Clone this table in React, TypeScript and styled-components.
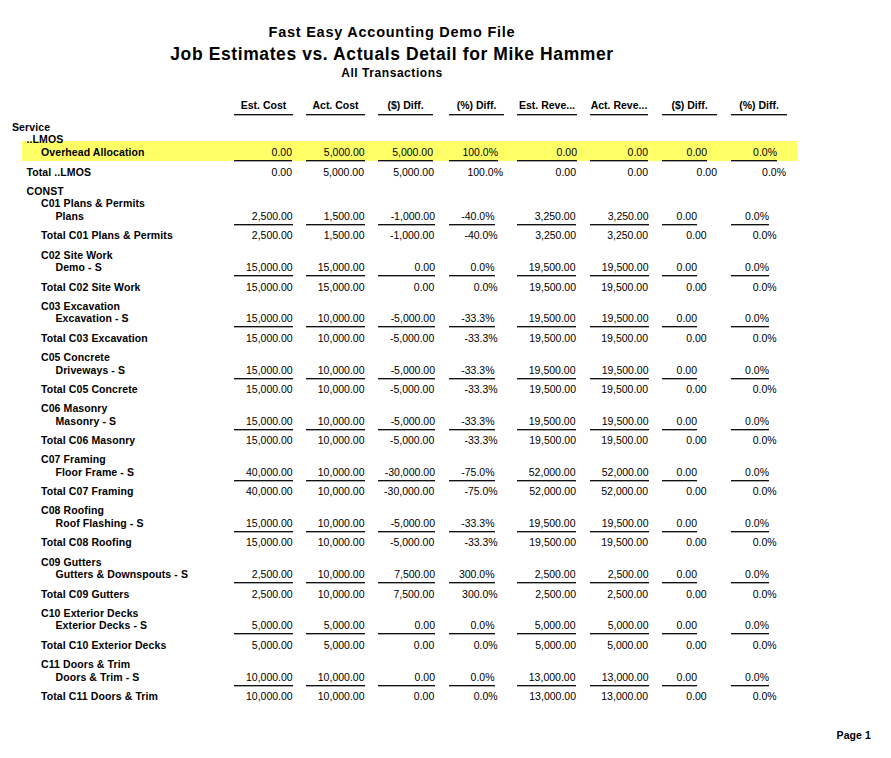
import React from 'react'
import styled, { createGlobalStyle, css } from 'styled-components'

const GlobalStyle = createGlobalStyle`
    body {
        margin: 0;
        background: #fff;
        color: #000;
        font-family: "Liberation Sans", Arial, sans-serif;
    }
`

// column slots (left edge to next column's left edge)
const SLOTS = [72, 72, 71, 68, 73, 72, 69, 69]

const HEAD_W = [59, 59, 55, 55, 60, 58, 55, 56]
const DATA_W = [58.7, 58.5, 57, 45.5, 58.5, 58.5, 35, 38]
const TOTAL_W = [58.7, 58.5, 56.3, 48.7, 59, 58, 44.7, 45.7]
const HL_W = [58, 58.7, 55, 49, 60, 58, 45, 46]
const HL_TOTAL_W = [58, 58, 56, 54, 59, 58, 55, 55]

const HEADERS = ['Est. Cost', 'Act. Cost', '($) Diff.', '(%) Diff.', 'Est. Reve...', 'Act. Reve...', '($) Diff.', '(%) Diff.']

interface Group {
    name: string
    item: string
    values: string[]
}

const groups: Group[] = [
    { name: 'C01 Plans & Permits', item: 'Plans', values: ['2,500.00', '1,500.00', '-1,000.00', '-40.0%', '3,250.00', '3,250.00', '0.00', '0.0%'] },
    { name: 'C02 Site Work', item: 'Demo - S', values: ['15,000.00', '15,000.00', '0.00', '0.0%', '19,500.00', '19,500.00', '0.00', '0.0%'] },
    { name: 'C03 Excavation', item: 'Excavation - S', values: ['15,000.00', '10,000.00', '-5,000.00', '-33.3%', '19,500.00', '19,500.00', '0.00', '0.0%'] },
    { name: 'C05 Concrete', item: 'Driveways - S', values: ['15,000.00', '10,000.00', '-5,000.00', '-33.3%', '19,500.00', '19,500.00', '0.00', '0.0%'] },
    { name: 'C06 Masonry', item: 'Masonry - S', values: ['15,000.00', '10,000.00', '-5,000.00', '-33.3%', '19,500.00', '19,500.00', '0.00', '0.0%'] },
    { name: 'C07 Framing', item: 'Floor Frame - S', values: ['40,000.00', '10,000.00', '-30,000.00', '-75.0%', '52,000.00', '52,000.00', '0.00', '0.0%'] },
    { name: 'C08 Roofing', item: 'Roof Flashing - S', values: ['15,000.00', '10,000.00', '-5,000.00', '-33.3%', '19,500.00', '19,500.00', '0.00', '0.0%'] },
    { name: 'C09 Gutters', item: 'Gutters & Downspouts - S', values: ['2,500.00', '10,000.00', '7,500.00', '300.0%', '2,500.00', '2,500.00', '0.00', '0.0%'] },
    { name: 'C10 Exterior Decks', item: 'Exterior Decks - S', values: ['5,000.00', '5,000.00', '0.00', '0.0%', '5,000.00', '5,000.00', '0.00', '0.0%'] },
    { name: 'C11 Doors & Trim', item: 'Doors & Trim - S', values: ['10,000.00', '10,000.00', '0.00', '0.0%', '13,000.00', '13,000.00', '0.00', '0.0%'] },
]

const overhead = ['0.00', '5,000.00', '5,000.00', '100.0%', '0.00', '0.00', '0.00', '0.0%']

const Page = styled.div`
    width: 891px;
    min-height: 758px;
    box-sizing: border-box;
`

const TitleBlock = styled.div`
    width: 784px;
    padding-top: 24.8px;
    display: flex;
    flex-direction: column;
    align-items: center;
    font-weight: bold;
    line-height: 1;
`

const CompanyName = styled.div`
    font-size: 14.5px;
    letter-spacing: 0.75px;
`

const ReportTitle = styled.div`
    font-size: 17.5px;
    letter-spacing: 0.6px;
    margin-top: 6.7px;
`

const DateRange = styled.div`
    font-size: 12px;
    letter-spacing: 0.55px;
    margin-top: 3.2px;
`

const Report = styled.div`
    padding-left: 12px;
    margin-top: 21.4px;
    font-size: 10.5px;
`

const Row = styled.div`
    display: grid;
    grid-template-columns: 222px ${SLOTS.map((s) => `${s}px`).join(' ')};
    align-items: start;
    box-sizing: border-box;
    line-height: 13px;
`

const HeaderRow = styled(Row)`
    line-height: 11px;
    margin-bottom: 5.7px;
`

const HeadingRow = styled(Row)`
    height: 12.7px;
`

const DataRow = styled(Row)<{ $highlight?: boolean }>`
    height: 19.3px;
    ${(p) =>
        p.$highlight &&
        css`
            height: 25px;
            margin-top: -5px;
            padding-top: 5px;
            background: linear-gradient(to right, transparent 10px, #ffff66 10px, #ffff66 785px, transparent 785px) top left / 100% 20px no-repeat;
        `}
`

const TotalRow = styled(Row)<{ $height?: number }>`
    height: ${(p) => p.$height ?? 19.2}px;
`

const Label = styled.div<{ $level: number }>`
    padding-left: ${(p) => p.$level * 14.5}px;
    font-weight: bold;
    letter-spacing: 0.1px;
    white-space: nowrap;
`

const rule = css`
    border-bottom: 1px solid #111;
    box-shadow: 0 1px 0 #a8a8a8;
`

const HeadCell = styled.div<{ $w: number }>`
    width: ${(p) => p.$w}px;
    text-align: center;
    font-weight: bold;
    white-space: nowrap;
    overflow: hidden;
    padding-bottom: 2.9px;
    ${rule}
`

const Amount = styled.div<{ $w: number; $rule?: boolean }>`
    width: ${(p) => p.$w}px;
    text-align: right;
    white-space: nowrap;
    ${(p) =>
        p.$rule &&
        css`
            padding-bottom: 1px;
            ${rule}
        `}
`

const PageNumber = styled.div`
    margin-top: 20.2px;
    padding-right: 20px;
    text-align: right;
    font-size: 10.5px;
    line-height: 13px;
    font-weight: bold;
    letter-spacing: 0.1px;
`

const Amounts = ({ values, widths, ruled }: { values: string[]; widths: number[]; ruled?: boolean }) => (
    <>
        {values.map((v, i) => (
            <Amount key={i} $w={widths[i]} $rule={ruled}>
                {v}
            </Amount>
        ))}
    </>
)

const App = () => {
    return (
        <Page>
            <GlobalStyle />
            <TitleBlock>
                <CompanyName>Fast Easy Accounting Demo File</CompanyName>
                <ReportTitle>Job Estimates vs. Actuals Detail for Mike Hammer</ReportTitle>
                <DateRange>All Transactions</DateRange>
            </TitleBlock>

            <Report>
                <HeaderRow>
                    <div />
                    {HEADERS.map((h, i) => (
                        <HeadCell key={i} $w={HEAD_W[i]}>
                            {h}
                        </HeadCell>
                    ))}
                </HeaderRow>

                <HeadingRow>
                    <Label $level={0}>Service</Label>
                </HeadingRow>
                <HeadingRow>
                    <Label $level={1}>..LMOS</Label>
                </HeadingRow>
                <DataRow $highlight>
                    <Label $level={2}>Overhead Allocation</Label>
                    <Amounts values={overhead} widths={HL_W} ruled />
                </DataRow>
                <TotalRow $height={18.7}>
                    <Label $level={1}>Total ..LMOS</Label>
                    <Amounts values={overhead} widths={HL_TOTAL_W} />
                </TotalRow>

                <HeadingRow>
                    <Label $level={1}>CONST</Label>
                </HeadingRow>
                {groups.map((g) => (
                    <React.Fragment key={g.name}>
                        <HeadingRow>
                            <Label $level={2}>{g.name}</Label>
                        </HeadingRow>
                        <DataRow>
                            <Label $level={3}>{g.item}</Label>
                            <Amounts values={g.values} widths={DATA_W} ruled />
                        </DataRow>
                        <TotalRow>
                            <Label $level={2}>Total {g.name}</Label>
                            <Amounts values={g.values} widths={TOTAL_W} />
                        </TotalRow>
                    </React.Fragment>
                ))}
            </Report>

            <PageNumber>Page 1</PageNumber>
        </Page>
    )
}

export default App
